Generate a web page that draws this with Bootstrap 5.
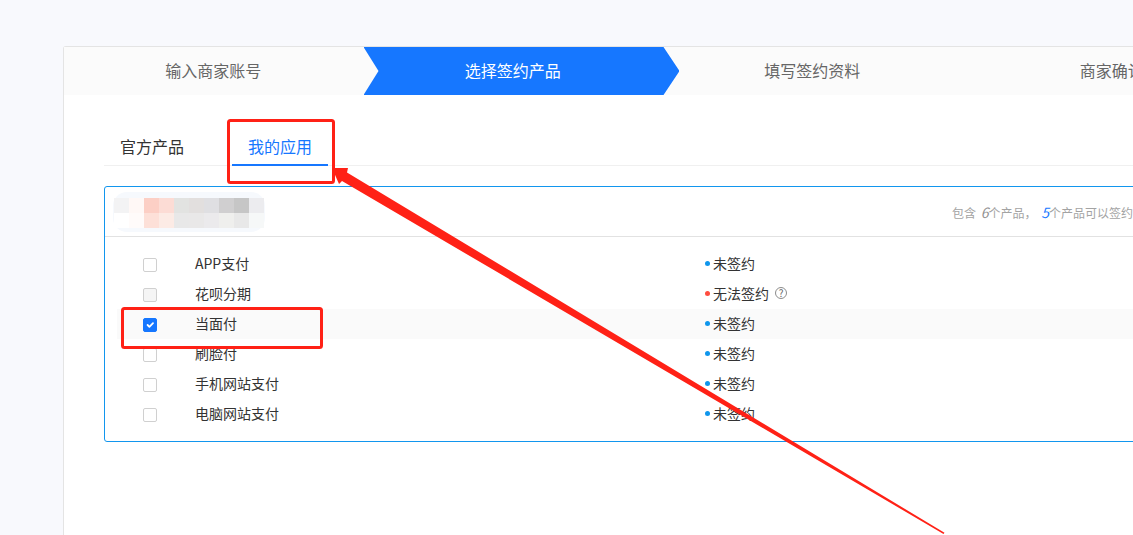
<!DOCTYPE html>
<html lang="zh-CN">
<head>
<meta charset="utf-8">
<title>选择签约产品</title>
<link href="https://cdn.jsdelivr.net/npm/bootstrap@5.3.0/dist/css/bootstrap.min.css" rel="stylesheet">
<style>
html, body { height: 535px; overflow: hidden; }
body { background: #f8f9fd; color: #333; font-family: "Noto Sans CJK SC", "Liberation Sans", sans-serif; font-size: 14px; position: relative; }
.page-wrap { padding: 46px 0 0 63px; width: 1300px; height: 535px; }
.sign-panel { width: 1200px; height: 520px; background: #fff; border: 1px solid #e4e4e4; border-bottom: 0; border-radius: 3px 0 0 0; flex-shrink: 0; }
.step-bar { height: 48px; background: #fbfbfb; }
.step-item { width: 300px; height: 48px; font-size: 16px; color: #666; padding: 0 1px 2px 0; }
.step-item.current { width: 316px; margin-right: -16px; padding-right: 17px; background: #1677ff; color: #fff; clip-path: polygon(0 0, 300px 0, 316px 50%, 300px 100%, 0 100%, 15px 50%); position: relative; z-index: 1; }
.panel-body { padding: 36px 40px 0; }
.tab-row { border-bottom: 1px solid #f0f0f0; gap: 32px; height: 35px; }
.tab-link { font-size: 16px; line-height: 22px; padding: 4px 16px 7px; border-bottom: 2px solid transparent; height: 35px; color: #333; text-decoration: none; }
.tab-link.current { color: #1677ff; border-bottom-color: #1677ff; }
.product-box { margin-top: 20px; border: 1px solid #1296ee; border-radius: 3px; height: 256px; }
.box-head { height: 50px; border-bottom: 1px solid #e2e2e2; padding-right: 88px; }
.blur-logo { width: 152px; height: 40px; margin: 5px 0 0 8px; flex-shrink: 0; display: block; }
.box-summary { font-size: 12px; color: #a3a3a3; white-space: nowrap; margin-top: 2px; word-spacing: 2px; }
.box-summary i { color: #8f8f8f; font-size: 14px; }
.box-summary i.hl { color: #1677ff; }
.product-list { padding: 12px 12px 0; }
.product-row { height: 30px; padding: 0 0 2px 26px; }
.product-row.picked { background: #fafafa; }
.pick-col { width: 52px; line-height: 0; margin-top: 4px; }
.name-col { width: 510px; }
.form-check-input.pick { width: 14px; height: 14px; margin: 0; border: 1px solid #d0d0d0; border-radius: 2px; background-color: #fff; opacity: 1; }
.form-check-input.pick:disabled { background-color: #f5f5f5; opacity: 1; }
.form-check-input.pick:checked { background-color: #1677ff; border-color: #1677ff; }
.dot { width: 5px; height: 5px; border-radius: 50%; background: #0f96ec; margin-right: 3px; }
.dot.bad { background: #ff4d3f; }
.help-mark { width: 12px; height: 12px; border: 1px solid #8c8c8c; border-radius: 50%; font-size: 10px; line-height: 10px; color: #666; margin-left: 6px; text-align: center; }
.annot { position: absolute; left: 0; top: 0; width: 1133px; height: 535px; pointer-events: none; z-index: 5; }
</style>
</head>
<body>
<div class="page-wrap d-flex">
  <div class="sign-panel">
    <div class="step-bar d-flex">
      <div class="step-item d-flex align-items-center justify-content-center">输入商家账号</div>
      <div class="step-item current d-flex align-items-center justify-content-center">选择签约产品</div>
      <div class="step-item d-flex align-items-center justify-content-center">填写签约资料</div>
      <div class="step-item d-flex align-items-center justify-content-center">商家确认</div>
    </div>
    <div class="panel-body">
      <div class="tab-row d-flex">
        <a class="tab-link" href="#">官方产品</a>
        <a class="tab-link current" href="#">我的应用</a>
      </div>
      <div class="product-box">
        <div class="box-head d-flex align-items-center">
          <svg class="blur-logo align-self-start" viewBox="0 0 152 40" aria-hidden="true">
            <defs><filter id="soft" x="-5%" y="-10%" width="110%" height="120%"><feGaussianBlur stdDeviation="0.35"/></filter></defs>
            <rect x="0" y="0" width="152" height="40" rx="14" fill="#f6f9fd"/>
            <g filter="url(#soft)">
              <rect x="1" y="6" width="15" height="15" fill="#f3f3f4"/><rect x="16" y="6" width="15" height="15" fill="#fff8f6"/><rect x="31" y="6" width="15" height="15" fill="#fccfc5"/><rect x="46" y="6" width="15" height="15" fill="#fcdcd5"/><rect x="61" y="6" width="15" height="15" fill="#e2e3e1"/><rect x="76" y="6" width="15" height="15" fill="#e2dfde"/><rect x="91" y="6" width="15" height="15" fill="#dfdfe2"/><rect x="106" y="6" width="15" height="15" fill="#d0cfd0"/><rect x="121" y="6" width="15" height="15" fill="#c6c6c6"/><rect x="136" y="6" width="15" height="15" fill="#ececef"/>
              <rect x="1" y="21" width="15" height="15" fill="#fff"/><rect x="16" y="21" width="15" height="15" fill="#fffbfa"/><rect x="31" y="21" width="15" height="15" fill="#fde0d8"/><rect x="46" y="21" width="15" height="15" fill="#fcebe5"/><rect x="61" y="21" width="15" height="15" fill="#e8e8e8"/><rect x="76" y="21" width="15" height="15" fill="#e9e8e8"/><rect x="91" y="21" width="15" height="15" fill="#ebeaec"/><rect x="106" y="21" width="15" height="15" fill="#efefed"/><rect x="121" y="21" width="15" height="15" fill="#e8e8e8"/><rect x="136" y="21" width="15" height="15" fill="#f6f8f8"/>
            </g>
          </svg>
          <div class="box-summary ms-auto">包含 <i>6</i>个产品， <i class="hl">5</i>个产品可以签约</div>
        </div>
        <div class="product-list">
          <div class="product-row d-flex align-items-center"><div class="pick-col"><input class="form-check-input pick" type="checkbox" aria-label="APP支付"></div><div class="name-col">APP支付</div><span class="dot"></span>未签约</div>
          <div class="product-row d-flex align-items-center"><div class="pick-col"><input class="form-check-input pick" type="checkbox" disabled aria-label="花呗分期"></div><div class="name-col">花呗分期</div><span class="dot bad"></span>无法签约<span class="help-mark">?</span></div>
          <div class="product-row picked d-flex align-items-center"><div class="pick-col"><input class="form-check-input pick" type="checkbox" checked aria-label="当面付"></div><div class="name-col">当面付</div><span class="dot"></span>未签约</div>
          <div class="product-row d-flex align-items-center"><div class="pick-col"><input class="form-check-input pick" type="checkbox" aria-label="刷脸付"></div><div class="name-col">刷脸付</div><span class="dot"></span>未签约</div>
          <div class="product-row d-flex align-items-center"><div class="pick-col"><input class="form-check-input pick" type="checkbox" aria-label="手机网站支付"></div><div class="name-col">手机网站支付</div><span class="dot"></span>未签约</div>
          <div class="product-row d-flex align-items-center"><div class="pick-col"><input class="form-check-input pick" type="checkbox" aria-label="电脑网站支付"></div><div class="name-col">电脑网站支付</div><span class="dot"></span>未签约</div>
        </div>
      </div>
    </div>
  </div>
</div>
<svg class="annot" viewBox="0 0 1133 535" aria-hidden="true">
  <rect x="228.5" y="120.5" width="105" height="62" rx="2" fill="none" stroke="#ff2116" stroke-width="3"/>
  <rect x="122.5" y="308.5" width="199" height="39" rx="2" fill="none" stroke="#ff2116" stroke-width="3"/>
  <polygon points="332,168 348,168 347,172.5 944.5,532.8 943.5,534 342,181 339,184" fill="#ff2116"/>
</svg>
<script src="https://cdn.jsdelivr.net/npm/bootstrap@5.3.0/dist/js/bootstrap.bundle.min.js"></script>
</body>
</html>
